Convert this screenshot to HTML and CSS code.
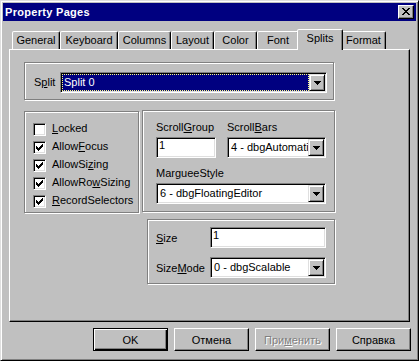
FILE: index.html
```html
<!DOCTYPE html>
<html lang="en">
<head>
  <meta charset="UTF-8">
  <title>Property Pages</title>
  <link rel="stylesheet" href="styles.css">
</head>
<body>

  <div class="window">
    <div class="titlebar">
      <span class="title">Property Pages</span>
      <div class="close">
        <svg width="8" height="7" viewBox="0 0 8 7" shape-rendering="crispEdges"><path d="M0 0h2v1h-2zM6 0h2v1h-2zM1 1h2v1h-2zM5 1h2v1h-2zM2 2h4v1h-4zM3 3h2v1h-2zM2 4h4v1h-4zM1 5h2v1h-2zM5 5h2v1h-2zM0 6h2v1h-2zM6 6h2v1h-2z"/></svg>
      </div>
    </div>

    <div class="tabs">
      <div class="tab tab-general">General</div>
      <div class="tab tab-keyboard">Keyboard</div>
      <div class="tab tab-columns">Columns</div>
      <div class="tab tab-layout">Layout</div>
      <div class="tab tab-color">Color</div>
      <div class="tab tab-font">Font</div>
      <div class="tab tab-splits active">Splits</div>
      <div class="tab tab-format">Format</div>
    </div>

    <div class="panel">
      <div class="group group-split">
        <span class="split-label">S<u>p</u>lit</span>
        <div class="combo combo-split">
          <div class="combo-text sel">Split 0</div>
          <div class="dd"><svg width="7" height="4" viewBox="0 0 7 4" shape-rendering="crispEdges"><path d="M0 0h7v1h-7zM1 1h5v1h-5zM2 2h3v1h-3zM3 3h1v1h-1z"/></svg></div>
        </div>
      </div>

      <div class="lower">
        <div class="group group-checks">
          <div class="check-row"><div class="box"></div><span><u>L</u>ocked</span></div>
          <div class="check-row"><div class="box"><svg width="7" height="7" viewBox="0 0 7 7" shape-rendering="crispEdges"><path d="M0 2h1v3h-1zM1 3h1v3h-1zM2 4h1v3h-1zM3 3h1v3h-1zM4 2h1v3h-1zM5 1h1v3h-1zM6 0h1v3h-1z"/></svg></div><span>Allow<u>F</u>ocus</span></div>
          <div class="check-row"><div class="box"><svg width="7" height="7" viewBox="0 0 7 7" shape-rendering="crispEdges"><path d="M0 2h1v3h-1zM1 3h1v3h-1zM2 4h1v3h-1zM3 3h1v3h-1zM4 2h1v3h-1zM5 1h1v3h-1zM6 0h1v3h-1z"/></svg></div><span>AllowSi<u>z</u>ing</span></div>
          <div class="check-row"><div class="box"><svg width="7" height="7" viewBox="0 0 7 7" shape-rendering="crispEdges"><path d="M0 2h1v3h-1zM1 3h1v3h-1zM2 4h1v3h-1zM3 3h1v3h-1zM4 2h1v3h-1zM5 1h1v3h-1zM6 0h1v3h-1z"/></svg></div><span>AllowRo<u>w</u>Sizing</span></div>
          <div class="check-row"><div class="box"><svg width="7" height="7" viewBox="0 0 7 7" shape-rendering="crispEdges"><path d="M0 2h1v3h-1zM1 3h1v3h-1zM2 4h1v3h-1zM3 3h1v3h-1zM4 2h1v3h-1zM5 1h1v3h-1zM6 0h1v3h-1z"/></svg></div><span><u>R</u>ecordSelectors</span></div>
        </div>

        <div class="right-col">
          <div class="group group-scroll">
            <div class="field">
              <div class="lbl">Scroll<u>G</u>roup</div>
              <div class="textbox">1</div>
            </div>
            <div class="field">
              <div class="lbl">Scroll<u>B</u>ars</div>
              <div class="combo">
                <div class="combo-text">4 - dbgAutomatic</div>
                <div class="dd"><svg width="7" height="4" viewBox="0 0 7 4" shape-rendering="crispEdges"><path d="M0 0h7v1h-7zM1 1h5v1h-5zM2 2h3v1h-3zM3 3h1v1h-1z"/></svg></div>
              </div>
            </div>
            <div class="field wide">
              <div class="lbl">MargueeStyle</div>
              <div class="combo">
                <div class="combo-text">6 - dbgFloatingEditor</div>
                <div class="dd"><svg width="7" height="4" viewBox="0 0 7 4" shape-rendering="crispEdges"><path d="M0 0h7v1h-7zM1 1h5v1h-5zM2 2h3v1h-3zM3 3h1v1h-1z"/></svg></div>
              </div>
            </div>
          </div>

          <div class="group group-size">
            <div class="size-row">
              <span class="size-label"><u>S</u>ize</span>
              <div class="textbox size-input">1</div>
            </div>
            <div class="size-row">
              <span class="size-label">Size<u>M</u>ode</span>
              <div class="combo size-input">
                <div class="combo-text">0 - dbgScalable</div>
                <div class="dd"><svg width="7" height="4" viewBox="0 0 7 4" shape-rendering="crispEdges"><path d="M0 0h7v1h-7zM1 1h5v1h-5zM2 2h3v1h-3zM3 3h1v1h-1z"/></svg></div>
              </div>
            </div>
          </div>
        </div>
      </div>
    </div>

    <div class="buttons">
      <button class="btn default">OK</button>
      <button class="btn">Отмена</button>
      <button class="btn" disabled>При<u>м</u>енить</button>
      <button class="btn">Справка</button>
    </div>
  </div>

</body>
</html>
```

FILE: styles.css
```css
body {
  margin: 0;
  background: #c0c0c0;
  font-family: "Liberation Sans", Arial, sans-serif;
  font-size: 11px;
  color: #000;
}

u {
  text-decoration-thickness: 1px;
  text-underline-offset: 1px;
}

.window {
  width: 419px;
  height: 361px;
  box-sizing: border-box;
  background: #c0c0c0;
  border: 1px solid;
  border-color: #dfdfdf #000 #000 #dfdfdf;
  box-shadow: inset 1px 1px #fff, inset -1px -1px #808080;
  padding: 2px;
}

/* title bar */
.titlebar {
  height: 18px;
  background: #000080;
  color: #fff;
  display: flex;
  align-items: center;
  justify-content: space-between;
  padding: 0 2px 0 2px;
}

.title {
  font-weight: bold;
  letter-spacing: 0.3px;
  line-height: 13px;
}

.close {
  width: 16px;
  height: 14px;
  box-sizing: border-box;
  background: #c0c0c0;
  border: 1px solid;
  border-color: #fff #000 #000 #fff;
  box-shadow: inset -1px -1px #808080;
  display: flex;
  justify-content: center;
  align-items: flex-start;
}

.close svg {
  margin-top: 2px;
}

/* tabs */
.tabs {
  display: flex;
  align-items: flex-end;
  height: 20px;
  margin: 8px 0 0 9px;
}

.tab {
  height: 18px;
  box-sizing: border-box;
  border: 1px solid;
  border-bottom: none;
  border-color: #fff #000 transparent #fff;
  border-radius: 2px 2px 0 0;
  box-shadow: inset -1px 0 #808080;
  text-align: center;
  line-height: 17px;
  background: #c0c0c0;
}

.tab-general { width: 48px; }
.tab-keyboard { width: 58px; }
.tab-columns { width: 53px; }
.tab-layout { width: 43px; }
.tab-color { width: 43px; }
.tab-font { width: 42px; }
.tab-splits { width: 42px; }
.tab-format { width: 45px; }

.tab.active {
  width: 46px;
  height: 21px;
  margin: 0 -2px -1px;
  position: relative;
  z-index: 1;
}

/* panel */
.panel {
  margin: 0 6px;
  height: 273px;
  box-sizing: border-box;
  border: 1px solid;
  border-color: #fff #000 #000 #fff;
  box-shadow: inset -1px -1px #808080;
  padding: 12px 0 0 14px;
}

.group {
  box-sizing: border-box;
  border: 1px solid #808080;
  box-shadow: inset 1px 1px #fff, 1px 1px #fff;
}

.group-split {
  width: 310px;
  height: 38px;
  display: flex;
  align-items: flex-start;
  padding: 9px 0 0 9px;
}

.split-label {
  width: 26px;
  line-height: 21px;
}

.combo-split {
  width: 267px;
}

.lower {
  display: flex;
  align-items: flex-start;
  margin-top: 11px;
}

/* checkboxes */
.group-checks {
  width: 115px;
  height: 102px;
  padding: 9px 0 0 8px;
}

.check-row {
  display: flex;
  height: 18px;
}

.check-row span {
  margin-left: 6px;
  line-height: 15px;
}

.box {
  width: 13px;
  height: 13px;
  margin-top: 2px;
  box-sizing: border-box;
  background: #fff;
  border: 1px solid;
  border-color: #808080 #fff #fff #808080;
  box-shadow: inset 1px 1px #000, inset -1px -1px #dfdfdf;
  display: flex;
  align-items: center;
  justify-content: center;
}

.right-col {
  margin: -1px 0 0 3px;
}

.group-scroll {
  width: 193px;
  height: 102px;
  padding: 10px 0 0 13px;
  display: grid;
  grid-template-columns: 60px 99px;
  grid-auto-rows: min-content;
  column-gap: 11px;
  row-gap: 9px;
}

.field.wide {
  grid-column: span 2;
}

.lbl {
  line-height: 13px;
  margin-bottom: 3px;
}

.group-size {
  width: 188px;
  height: 65px;
  margin: 7px 0 0 5px;
  padding: 7px 0 0 8px;
}

.size-row {
  display: flex;
  align-items: center;
}

.size-row + .size-row {
  margin-top: 9px;
}

.size-label {
  width: 54px;
}

.size-input {
  width: 116px;
}

/* inputs */
.textbox,
.combo {
  height: 21px;
  box-sizing: border-box;
  background: #fff;
  border: 1px solid;
  border-color: #808080 #fff #fff #808080;
  box-shadow: inset 1px 1px #000, inset -1px -1px #dfdfdf;
}

.textbox {
  padding: 1px 2px;
  line-height: 13px;
}

.combo {
  display: flex;
  padding: 1px;
}

.combo-text {
  flex: 1;
  min-width: 0;
  overflow: hidden;
  white-space: nowrap;
  padding-left: 2px;
  line-height: 17px;
}

.combo-text.sel {
  background: #000080;
  color: #fff;
  border: 1px dotted #ffff80;
  padding-left: 1px;
  line-height: 15px;
}

.dd {
  width: 16px;
  height: 17px;
  box-sizing: border-box;
  background: #c0c0c0;
  border: 1px solid;
  border-color: #dfdfdf #000 #000 #dfdfdf;
  box-shadow: inset 1px 1px #fff, inset -1px -1px #808080;
  display: flex;
  align-items: center;
  justify-content: center;
}

/* dialog buttons */
.buttons {
  display: flex;
  justify-content: flex-end;
  gap: 6px;
  margin: 6px 5px 0 0;
}

.btn {
  width: 75px;
  height: 23px;
  box-sizing: border-box;
  padding: 0;
  font: inherit;
  color: #000;
  background: #c0c0c0;
  border: 1px solid;
  border-color: #fff #000 #000 #fff;
  box-shadow: inset -1px -1px #808080;
  border-radius: 0;
}

.btn.default {
  border-color: #000;
  box-shadow: inset 1px 1px #fff, inset -1px -1px #000, inset -2px -2px #808080;
}

.btn:disabled {
  color: #808080;
  text-shadow: 1px 1px #fff;
}
```
